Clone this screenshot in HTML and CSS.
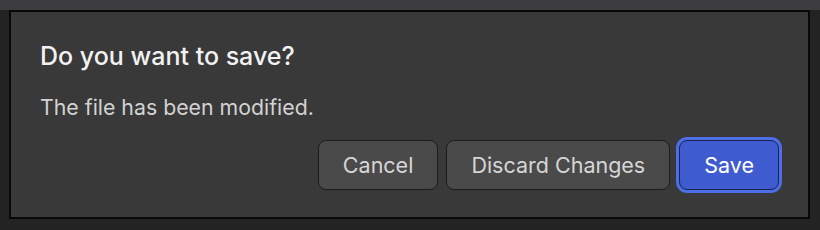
FILE: index.html
```html
<!DOCTYPE html>
<html>
<head>
<meta charset="utf-8">
<link rel="stylesheet" href="styles.css">
</head>
<body>
<div class="topbar"></div>
<div class="stage">
  <div class="dialog">
    <h1 class="title">Do you want to save?</h1>
    <p class="message">The file has been modified.</p>
    <div class="actions">
      <button class="btn">Cancel</button>
      <button class="btn">Discard Changes</button>
      <button class="btn primary">Save</button>
    </div>
  </div>
</div>
</body>
</html>
```
FILE: styles.css
```css
* { box-sizing: border-box; }
html, body {
  margin: 0;
  padding: 0;
  width: 820px;
  height: 230px;
  background: #232323;
  font-family: Inter, "Noto Sans", sans-serif;
  overflow: hidden;
}
.topbar {
  height: 10px;
  background: #3d3c3f;
}
.stage {
  padding: 0 10px 0 9px;
}
.dialog {
  width: 801px;
  height: 209px;
  background: #393939;
  border: 2px solid #080808;
  padding: 29px 29px 0 29px;
  display: flex;
  flex-direction: column;
}
.title {
  margin: 0;
  font-size: 25px;
  font-weight: 500;
  line-height: 30px;
  color: #f2f2f2;
}
.message {
  margin: 23px 0 0 0;
  font-size: 21.3px;
  line-height: 26px;
  color: #d2d2d2;
}
.actions {
  margin-top: 20px;
  display: flex;
  justify-content: flex-end;
  gap: 8px;
}
.btn {
  height: 50px;
  padding: 0 24px;
  background: #4a4a4a;
  border: 1px solid #1c1c1c;
  border-radius: 8px;
  color: #d6d6d6;
  font-family: Inter, "Noto Sans", sans-serif;
  font-size: 21.5px;
}
.btn.primary {
  background: #3f5bd0;
  border-color: #1b2350;
  color: #ffffff;
  box-shadow: 0 0 0 3px #4c6ee6;
  margin-left: 1px;
}
```
